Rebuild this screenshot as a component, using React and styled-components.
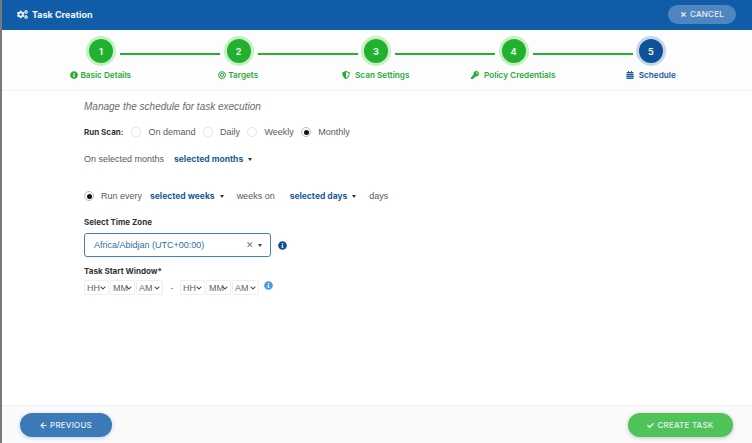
import React from "react";
import styled, { createGlobalStyle } from "styled-components";
import { FaCogs, FaInfoCircle, FaBullseye, FaShieldAlt, FaKey, FaCalendarAlt, FaTimes, FaArrowLeft, FaCheck, FaChevronDown } from "react-icons/fa";

const GlobalStyle = createGlobalStyle`
html, body { margin: 0; padding: 0; background: #fff; }
body { font-family: "Liberation Sans", Arial, sans-serif; color: #555; }
* { box-sizing: border-box; }
`;

const Page = styled.div`
width: 752px;
height: 443px;
display: flex;
flex-direction: column;
overflow: hidden;
border-left: 2px solid #77797c;
background: #fff;
`;

const Header = styled.header`
height: 30px;
margin-left: -2px;
padding: 0 16px 2px 17px;
display: flex;
align-items: center;
justify-content: space-between;
background: #115ca8;
color: #fff;
`;

const Title = styled.div`
display: flex;
align-items: center;
gap: 4px;
font-family: Inter, sans-serif;
font-size: 9px;
font-weight: 700;
color: #f1f6fb;
`;

const CancelButton = styled.button`
width: 68px;
height: 19px;
border: none;
border-radius: 10px;
background: #4f86bf;
color: #e6eef7;
font-family: Inter, sans-serif;
font-size: 8px;
font-weight: 500;
letter-spacing: 0.2px;
display: flex;
align-items: center;
justify-content: center;
gap: 3px;
padding: 0;
`;

const Stepper = styled.section`
height: 61px;
padding-top: 9px;
background: #fdfdfd;
border-bottom: 1px solid #f1f1f1;
`;

const Track = styled.div`
display: flex;
align-items: center;
padding-left: 87px;
`;

const Circle = styled.div`
width: 24px;
height: 24px;
flex: none;
border-radius: 50%;
background: ${(p) => (p.$active ? "#0f5298" : "#22b02f")};
box-shadow: 0 0 0 3px ${(p) => (p.$active ? "#c4d6ea" : "#c5efc5")};
color: #eef8ee;
font-family: Inter, sans-serif;
font-size: 9px;
font-weight: 700;
display: flex;
align-items: center;
justify-content: center;
`;

const Line = styled.div`
width: 100px;
height: 2px;
margin: 6px 6.5px 0 7px;
background: #27ae33;
`;

const Labels = styled.div`
display: grid;
grid-template-columns: repeat(5, 137.5px);
padding-left: 30px;
margin-top: 7px;
`;

const StepLabel = styled.div`
display: flex;
align-items: center;
justify-content: center;
gap: ${(p) => (p.$gap ? p.$gap : 2)}px;
font-family: Inter, sans-serif;
font-size: 8.2px;
font-weight: 600;
white-space: nowrap;
color: ${(p) => (p.$active ? "#1a5a9e" : "#2fa83a")};
`;

const Content = styled.main`
flex: 1;
padding: 9px 0 0 82px;
font-size: 9px;
color: #5b5b5b;
`;

const Subtitle = styled.div`
font-size: 10px;
font-style: italic;
color: #6b6b6b;
height: 14px;
line-height: 14px;
`;

const Row = styled.div`
display: flex;
align-items: center;
height: 14px;
margin-top: ${(p) => p.$top || 0}px;
`;

const Strong = styled.span`
font-weight: 700;
font-family: Inter, sans-serif;
font-size: 8px;
color: #333;
`;

const RadioItem = styled.span`
display: flex;
align-items: center;
gap: 7px;
margin-left: ${(p) => p.$left || 0}px;
`;

const RadioDot = styled.span`
width: 10px;
height: 10px;
border-radius: 50%;
border: 1px solid ${(p) => (p.$on ? "#bbb" : "#e4e4e4")};
background: #fff;
display: flex;
align-items: center;
justify-content: center;
&::after {
  content: "";
  width: 5px;
  height: 5px;
  border-radius: 50%;
  background: ${(p) => (p.$on ? "#111" : "transparent")};
}
`;

const Dropdown = styled.span`
display: inline-flex;
align-items: center;
gap: 5px;
margin: 0 ${(p) => p.$right || 0}px 0 ${(p) => p.$left || 0}px;
font-family: Inter, sans-serif;
font-size: 8.5px;
font-weight: 700;
color: #1a5a9e;
&::after {
  content: "";
  border-left: 2.5px solid transparent;
  border-right: 2.5px solid transparent;
  border-top: 3px solid #333;
}
`;

const ZoneRow = styled.div`
display: flex;
align-items: center;
gap: 7px;
margin-top: 4px;
`;

const ZoneBox = styled.div`
width: 187px;
height: 24px;
padding: 0 8px 0 9px;
border: 1px solid #4a7fb5;
border-radius: 3px;
display: flex;
align-items: center;
justify-content: space-between;
color: #2f6ea8;
font-size: 9px;
`;

const ZoneTools = styled.span`
display: flex;
align-items: center;
gap: 4px;
color: #777;
font-size: 9px;
&::after {
  content: "";
  border-left: 2.5px solid transparent;
  border-right: 2.5px solid transparent;
  border-top: 3px solid #444;
}
`;

const TimeRow = styled.div`
display: flex;
align-items: center;
margin-top: 2px;
`;

const TimeField = styled.span`
position: relative;
display: inline-flex;
margin-right: 1px;
color: #444;
& > svg {
  position: absolute;
  right: 3px;
  top: 5px;
  pointer-events: none;
}
`;

const TimeSelect = styled.select`
appearance: none;
width: ${(p) => p.$w || 25}px;
height: 15px;
padding: 0 0 0 2px;
border: 1px solid #eeeeee;
border-radius: 2px;
background: #fff;
color: #666;
font-family: "Liberation Sans", Arial, sans-serif;
font-size: 9px;
`;

const Dash = styled.span`
width: 16px;
text-align: center;
color: #777;
`;

const Hint = styled.span`
display: flex;
margin: -4px 0 0 4px;
color: ${(p) => p.$color};
font-size: 9px;
`;

const Footer = styled.footer`
height: 38px;
padding: 0 19px 0 18px;
display: flex;
align-items: center;
justify-content: space-between;
background: #fafafa;
border-top: 1px solid #f1f1f1;
`;

const FooterButton = styled.button`
width: ${(p) => p.$w}px;
height: 24px;
margin-top: 1px;
border: none;
border-radius: 12px;
background: ${(p) => p.$bg};
box-shadow: 0 1px 4px ${(p) => p.$shadow};
color: #e8f1f8;
font-family: Inter, sans-serif;
font-size: 8px;
font-weight: 500;
letter-spacing: 0.2px;
display: flex;
align-items: center;
justify-content: center;
gap: 3px;
padding: 0;
`;

const steps = [
  { label: "Basic Details", icon: <FaInfoCircle size={8} /> },
  { label: "Targets", icon: <FaBullseye size={8} /> },
  { label: "Scan Settings", icon: <FaShieldAlt size={8} />, gap: 5 },
  { label: "Policy Credentials", icon: <FaKey size={8} />, gap: 5 },
  { label: "Schedule", icon: <FaCalendarAlt size={8} />, gap: 5, active: true },
];

const TimeInput = ({ value, w }) => (
  <TimeField>
    <TimeSelect $w={w}><option>{value}</option></TimeSelect>
    <FaChevronDown size={6} />
  </TimeField>
);

const TimeGroup = () => (
  <>
    <TimeInput value="HH" />
    <TimeInput value="MM" />
    <TimeInput value="AM" w={27} />
  </>
);

export default function App() {
  return (
    <>
      <GlobalStyle />
      <Page>
        <Header>
          <Title><FaCogs size={11} /> Task Creation</Title>
          <CancelButton><FaTimes size={7} /> CANCEL</CancelButton>
        </Header>

        <Stepper>
          <Track>
            {steps.map((s, i) => (
              <React.Fragment key={s.label}>
                <Circle $active={s.active}>{i + 1}</Circle>
                {i < 4 && <Line />}
              </React.Fragment>
            ))}
          </Track>
          <Labels>
            {steps.map((s) => (
              <StepLabel key={s.label} $active={s.active} $gap={s.gap}>
                {s.icon}{s.label}
              </StepLabel>
            ))}
          </Labels>
        </Stepper>

        <Content>
          <Subtitle>Manage the schedule for task execution</Subtitle>
          <Row $top={11}>
            <Strong>Run Scan:</Strong>
            <RadioItem $left={8}><RadioDot />On demand</RadioItem>
            <RadioItem $left={7.5}><RadioDot />Daily</RadioItem>
            <RadioItem $left={7.5}><RadioDot />Weekly</RadioItem>
            <RadioItem $left={7.5}><RadioDot $on />Monthly</RadioItem>
          </Row>
          <Row $top={13}>
            On selected months
            <Dropdown $left={10}>selected months</Dropdown>
          </Row>
          <Row $top={23}>
            <RadioItem><RadioDot $on />Run every</RadioItem>
            <Dropdown $left={8} $right={13}>selected weeks</Dropdown>
            weeks on
            <Dropdown $left={15} $right={13}>selected days</Dropdown>
            days
          </Row>
          <Row $top={12}><Strong>Select Time Zone</Strong></Row>
          <ZoneRow>
            <ZoneBox>
              Africa/Abidjan (UTC+00:00)
              <ZoneTools>✕</ZoneTools>
            </ZoneBox>
            <FaInfoCircle size={9} color="#0f4f8f" />
          </ZoneRow>
          <Row $top={7}><Strong>Task Start Window*</Strong></Row>
          <TimeRow>
            <TimeGroup />
            <Dash>-</Dash>
            <TimeGroup />
            <Hint $color="#4a9be0"><FaInfoCircle size={9} /></Hint>
          </TimeRow>
        </Content>

        <Footer>
          <FooterButton $w={92} $bg="#3c7ab8" $shadow="#b8d4ee"><FaArrowLeft size={7} /> PREVIOUS</FooterButton>
          <FooterButton $w={105} $bg="#4fc35a" $shadow="#c0c0c0"><FaCheck size={7} /> CREATE TASK</FooterButton>
        </Footer>
      </Page>
    </>
  );
}
